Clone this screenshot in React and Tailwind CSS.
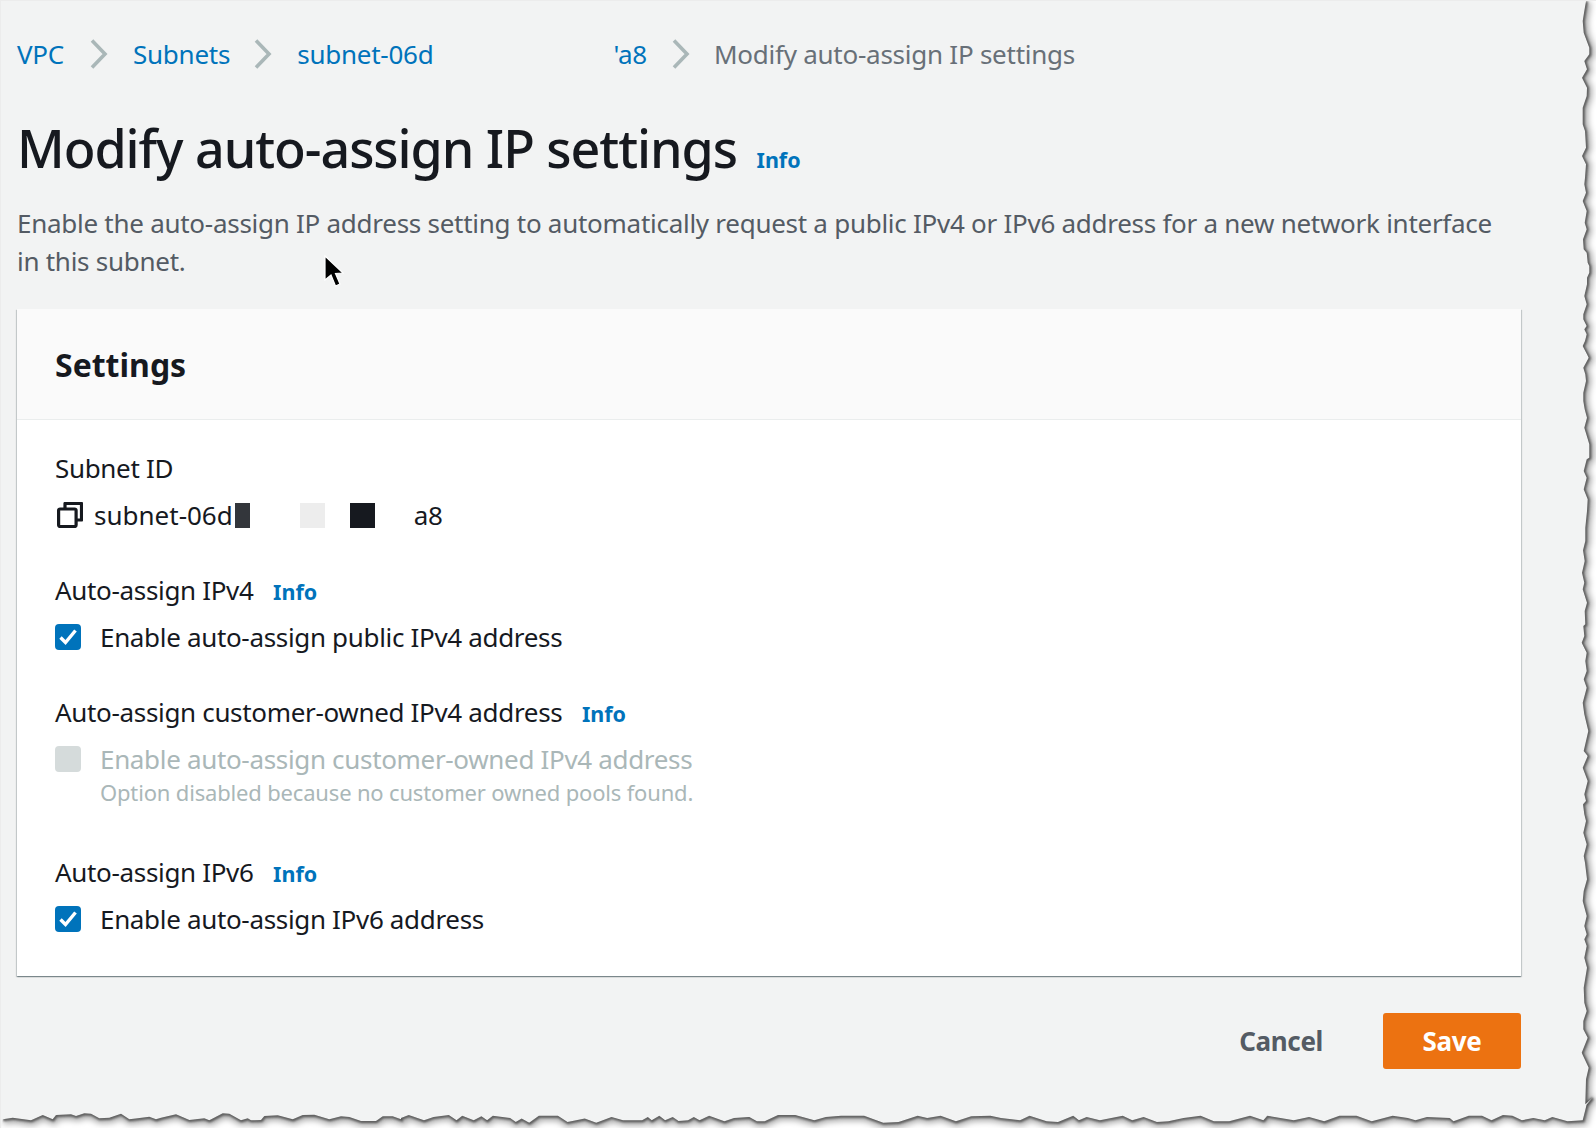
import React from 'react'

// traced from the torn edge of the picture: [x, y] in zoomed pixels, scaled below
const rightA = [[135,0],[130,30],[125,60],[128,95],[145,140],[145,160],[130,180],[138,205],[123,230],[138,260],[137,285],[125,320],[125,370],[132,390],[135,440],[123,465],[135,490],[132,530],[130,550],[135,575]]
const rightB = [[125,0],[137,30],[131,65],[137,85],[126,115],[128,145],[137,155],[140,185],[145,195],[145,215],[138,230],[138,250],[130,285],[137,310],[127,340],[127,355],[137,375],[130,385],[137,400],[132,420],[125,435],[138,460],[143,470],[127,500],[133,520],[135,540],[127,575],[127,600],[131,625],[138,650],[130,680],[136,700],[145,730],[145,770],[137,775],[128,810],[137,830],[128,865],[140,895]]
const rightC = [[138,0],[133,50],[133,90],[126,118],[131,150],[123,185],[130,215],[125,235],[138,275],[131,300],[133,340],[127,345],[130,375],[122,395],[137,425],[133,450],[137,480],[128,505],[137,530],[125,575],[130,610],[142,660],[128,720],[140,735],[125,770],[140,810],[130,850],[135,870],[126,880],[130,910]]
const rightD = [[135,0],[127,35],[137,70],[128,105],[132,125],[138,175],[128,210],[125,240],[137,285],[130,315],[137,340],[130,355],[137,375],[130,410],[138,440],[128,500],[130,545],[137,570],[127,600],[127,625],[140,650],[122,695],[143,740],[135,775],[133,850]]
const bottomC = [[1555,20],[1540,40],[1530,85],[1490,88],[1450,75],[1430,85],[1400,78],[1370,85],[1345,72],[1320,70],[1290,85],[1265,72],[1230,72],[1190,88],[1180,78],[1120,75],[1090,85],[1070,78],[1030,72],[975,88],[935,72],[890,72],[850,88],[810,75],[770,85],[700,72],[690,85],[655,72],[600,88],[560,88],[525,72],[480,78],[440,88],[410,90],[375,75],[345,85],[320,72],[290,78],[260,85],[225,75],[205,85],[190,72],[150,90],[120,88],[75,72],[50,85],[0,78]]
const bottomB = [[1540,72],[1490,73],[1450,88],[1410,72],[1375,78],[1350,72],[1300,90],[1260,92],[1210,72],[1150,72],[1110,75],[1080,85],[1030,70],[985,70],[950,88],[930,88],[910,75],[870,78],[845,88],[805,72],[780,85],[765,75],[750,85],[725,87],[710,75],[690,85],[675,72],[655,85],[645,75],[630,85],[580,85],[550,75],[510,92],[480,80],[435,90],[410,72],[360,72],[335,92],[315,80],[300,90],[285,78],[240,72],[225,85],[210,73],[190,85],[160,72],[145,85],[125,70],[85,75],[60,85],[20,70],[0,78]]
const bottomA = [[1200,175],[1175,166],[1145,166],[1125,180],[1080,180],[1045,168],[1020,166],[985,175],[940,161],[905,162],[875,175],[830,163],[790,165],[780,177],[750,178],[740,172],[720,178],[685,158],[665,157],[625,178],[610,172],[565,177],[525,160],[480,170],[465,175],[445,167],[410,172],[385,175],[360,158],[325,170],[295,172],[270,158],[250,157],[225,165],[210,160],[165,162],[155,175],[125,162],[90,178],[35,170],[5,175]]

const edgePoints = [
  ...rightA.map(([x, y]) => [1440 + (x + 300) / 3, y / 3]),
  ...rightB.map(([x, y]) => [1540 + x / 3, 200 + y / 3]),
  ...rightC.map(([x, y]) => [1540 + x / 3, 510 + y / 3]),
  ...rightD.map(([x, y]) => [1540 + x / 3, 820 + y / 3]),
  ...bottomC.map(([x, y]) => [1000 + x / 2.63, 1090 + y / 2.9]),
  ...bottomB.map(([x, y]) => [400 + x / 2.613, 1090 + y / 2.9]),
  ...bottomA.map(([x, y]) => [x / 3, 1060 + y / 3]),
]
const edgeLine = edgePoints.map(([x, y]) => `${x.toFixed(1)},${y.toFixed(1)}`).join(' ')

const TornEdge = () => (
  <svg className="absolute inset-0 pointer-events-none" width="1596" height="1128" viewBox="0 0 1596 1128">
    <defs>
      <filter id="soft" x="-5%" y="-5%" width="110%" height="110%">
        <feGaussianBlur stdDeviation="3.2" />
      </filter>
      <filter id="tight" x="-5%" y="-5%" width="110%" height="110%">
        <feGaussianBlur stdDeviation="0.8" />
      </filter>
      <clipPath id="outside">
        <polygon points={`1596,0 ${edgeLine} 0,1128 1596,1128`} />
      </clipPath>
    </defs>
    <polygon points={`1596,0 ${edgeLine} 0,1128 1596,1128`} fill="#ffffff" />
    <g clipPath="url(#outside)" fill="none">
      <polyline points={edgeLine} stroke="#000000" strokeOpacity="0.35" strokeWidth="8" filter="url(#soft)" transform="translate(1 1)" />
      <polyline points={edgeLine} stroke="#555555" strokeWidth="3" filter="url(#tight)" transform="translate(0.5 0.5)" />
    </g>
  </svg>
)

const Cursor = () => (
  <svg className="absolute left-[320px] top-[252px]" width="28" height="40" viewBox="0 0 28 40">
    <path d="M4 3 L4 27 L10 22 L14.5 33 L19 31 L14.5 20.5 L22 20 Z" fill="#000000" stroke="#ffffff" strokeWidth="1.2" />
  </svg>
)

const Chevron = () => (
  <svg width="18" height="30" viewBox="0 0 18 30" fill="none" className="shrink-0">
    <path d="M2 1.5 L15 15 L2 28.5" stroke="#aab7b8" strokeWidth="3.6" />
  </svg>
)

const CopyIcon = () => (
  <svg width="26" height="26" viewBox="0 0 26 26" fill="none" className="shrink-0">
    <path d="M8 6 V1.5 H24.5 V18 H19.5" stroke="#16191f" strokeWidth="3.2" strokeLinejoin="round" />
    <rect x="1.6" y="7" width="17.5" height="17.5" rx="1.5" stroke="#16191f" strokeWidth="3.2" />
  </svg>
)

const Info = () => (
  <span className="text-[21.5px] font-bold text-[#0073bb] ml-[19.5px] tracking-normal">Info</span>
)

const Checkbox = ({ label, checked, disabled }) => (
  <div className="flex items-center h-[34px]">
    <span className={`w-[26px] h-[26px] rounded-[4px] flex items-center justify-center ${disabled ? 'bg-[#d5dbdb]' : 'bg-[#0073bb]'}`}>
      {checked && (
        <svg width="22" height="22" viewBox="0 0 22 22" fill="none">
          <path d="M3.5 11.5 L8.5 16.5 L18.5 4.5" stroke="#ffffff" strokeWidth="3.4" />
        </svg>
      )}
    </span>
    <span className={`ml-[19px] ${disabled ? 'text-[#aab7b8]' : ''}`}>{label}</span>
  </div>
)

const Label = ({ children, info }) => (
  <div className="flex items-baseline h-[34px]">
    <span>{children}</span>
    {info && <Info />}
  </div>
)

export default function App() {
  return (
    <div className="relative w-[1596px] h-[1128px] overflow-hidden bg-[#f2f3f3] border-l border-t border-[#ececec] pl-[16px] pr-[75px] pt-[34px] font-['Noto_Sans',sans-serif] text-[#16191f] tracking-[-0.33px]">
      {/* Breadcrumb */}
      <nav className="flex items-center h-[38px] text-[26px] text-[#0073bb] tracking-[-0.25px]">
        <a>VPC</a>
        <span className="ml-[26px] mr-[25px]"><Chevron /></span>
        <a>Subnets</a>
        <span className="ml-[24px] mr-[25px]"><Chevron /></span>
        <a>subnet-06d</a>
        <a className="ml-[180px]">'a8</a>
        <span className="ml-[25px] mr-[24px]"><Chevron /></span>
        <span className="text-[#687078]">Modify auto-assign IP settings</span>
      </nav>

      {/* Title */}
      <div className="flex items-baseline mt-[40px] h-[70px]">
        <h1 className="text-[52px] leading-[70px] font-medium tracking-[-1.05px]">Modify auto-assign IP settings</h1>
        <Info />
      </div>
      <p className="mt-[21px] pr-[20px] text-[26px] leading-[38px] tracking-[-0.27px] text-[#545b64]">
        Enable the auto-assign IP address setting to automatically request a public IPv4 or IPv6 address for a new network interface in this subnet.
      </p>

      {/* Settings card */}
      <section className="mt-[29px] bg-white shadow-[0_1px_1px_0_rgba(0,28,36,0.3),1px_1px_1px_0_rgba(0,28,36,0.15),-1px_1px_1px_0_rgba(0,28,36,0.15)] text-[26px] leading-[34px]">
        <header className="h-[111px] flex items-center px-[38px] pt-[2px] bg-[#fafafa] border-b border-[#eaeded]">
          <h2 className="text-[32px] font-bold tracking-normal">Settings</h2>
        </header>
        <div className="px-[38px] pt-[31px] pb-[40px]">
          <Label>Subnet ID</Label>
          <div className="flex items-center h-[34px] mt-[13px] pl-[2px]">
            <CopyIcon />
            <span className="ml-[11px] tracking-normal">subnet-06d</span>
            <span className="w-[15px] h-[25px] bg-[#33363b] ml-[2px]" />
            <span className="w-[25px] h-[25px] bg-[#ededed] ml-[50px]" />
            <span className="w-[25px] h-[25px] bg-[#16191f] ml-[25px]" />
            <span className="ml-[39px]">a8</span>
          </div>

          <div className="mt-[41px]"><Label info>Auto-assign IPv4</Label></div>
          <div className="mt-[13px]"><Checkbox checked label="Enable auto-assign public IPv4 address" /></div>

          <div className="mt-[41px]"><Label info>Auto-assign customer-owned IPv4 address</Label></div>
          <div className="mt-[13px]"><Checkbox disabled label="Enable auto-assign customer-owned IPv4 address" /></div>
          <p className="ml-[45px] mt-px mb-[-1px] text-[22px] leading-[30px] tracking-[-0.17px] text-[#aab7b8]">Option disabled because no customer owned pools found.</p>

          <div className="mt-[49px]"><Label info>Auto-assign IPv6</Label></div>
          <div className="mt-[13px]"><Checkbox checked label="Enable auto-assign IPv6 address" /></div>
        </div>
      </section>

      {/* Actions */}
      <div className="flex items-center justify-end mt-[37px]">
        <button className="text-[26px] font-bold text-[#545b64] mr-[60px]">Cancel</button>
        <button className="w-[138px] h-[56px] rounded-[3px] bg-[#ec7211] text-white text-[26px] font-bold">Save</button>
      </div>

      <Cursor />
      <TornEdge />
    </div>
  )
}
